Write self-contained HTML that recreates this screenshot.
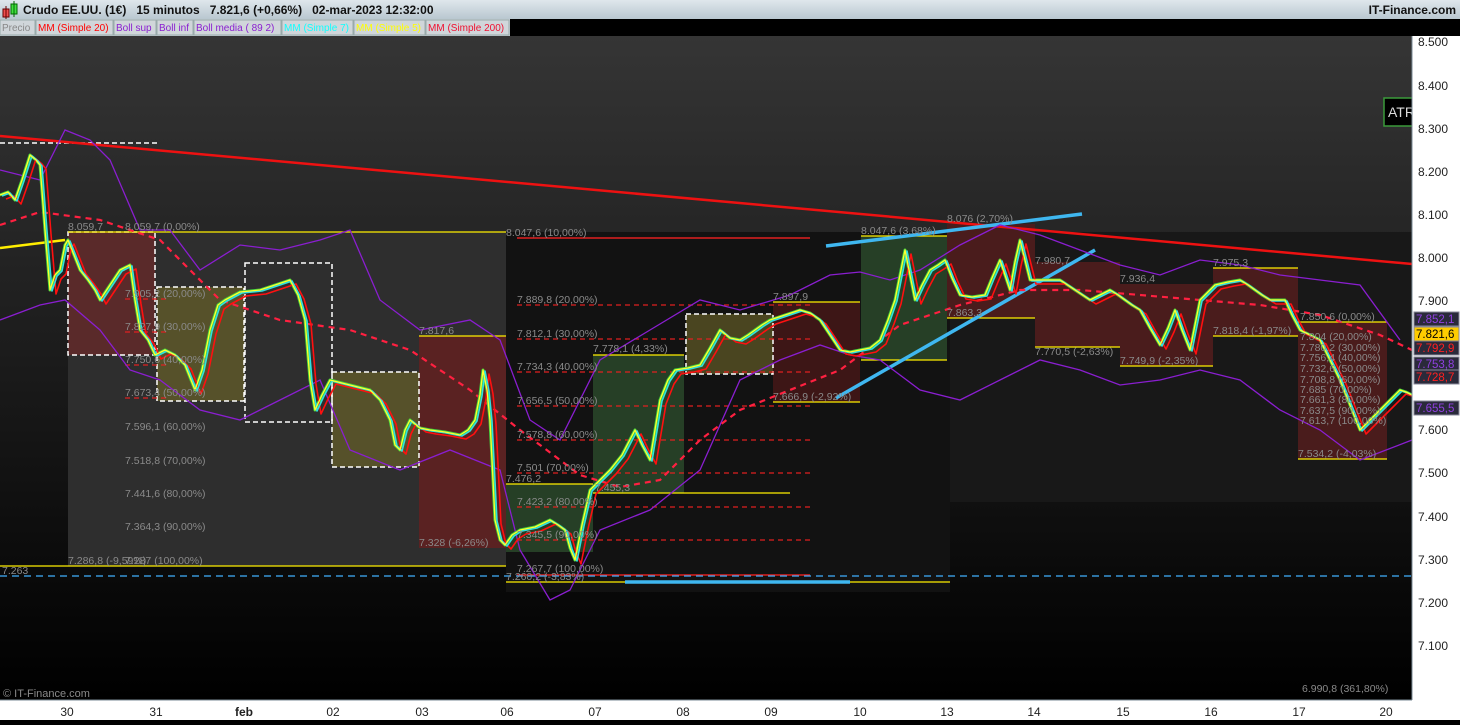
<!DOCTYPE html>
<html><head><meta charset="utf-8"><style>
body{margin:0;width:1460px;height:720px;overflow:hidden;background:#000;font-family:"Liberation Sans",sans-serif}
svg text{font-family:"Liberation Sans",sans-serif}
</style></head><body>
<svg width="1460" height="720" xmlns="http://www.w3.org/2000/svg" xmlns:xlink="http://www.w3.org/1999/xlink">
<defs>
<linearGradient id="bg" x1="0" y1="0" x2="0" y2="1"><stop offset="0" stop-color="#353535"/><stop offset="1" stop-color="#000"/></linearGradient>
<linearGradient id="hd" x1="0" y1="0" x2="0" y2="1"><stop offset="0" stop-color="#dfe7ec"/><stop offset="1" stop-color="#b9c7d0"/></linearGradient>
<path id="p" d="M0,195 L8,192 L15,200 L22,180 L30,155 L36,160 L40,165 L45,230 L50,290 L55,275 L60,270 L65,245 L68,240 L74,255 L80,270 L88,280 L95,290 L100,300 L110,285 L120,270 L130,265 L135,300 L140,330 L148,340 L155,355 L165,350 L175,355 L185,365 L195,390 L202,370 L210,330 L218,305 L225,300 L240,292 L260,290 L275,285 L290,280 L298,295 L305,320 L310,380 L315,410 L322,395 L330,380 L350,385 L370,390 L380,400 L390,420 L395,445 L400,450 L405,430 L410,420 L420,428 L430,430 L445,432 L460,435 L468,430 L475,420 L480,395 L483,370 L487,390 L490,420 L493,480 L495,520 L500,540 L505,545 L512,535 L520,530 L535,527 L550,520 L558,525 L565,530 L570,548 L575,560 L582,525 L590,490 L600,480 L610,470 L622,455 L635,430 L642,445 L650,460 L655,430 L660,400 L668,380 L675,370 L688,368 L700,365 L710,348 L720,330 L730,338 L740,340 L748,335 L755,330 L762,325 L770,320 L785,315 L800,310 L810,313 L820,320 L830,335 L840,350 L850,352 L860,350 L870,348 L880,340 L888,320 L895,300 L900,275 L905,250 L910,275 L915,300 L922,285 L930,270 L938,265 L945,260 L952,278 L960,295 L972,297 L985,295 L992,278 L1000,260 L1005,275 L1010,290 L1015,262 L1020,240 L1025,260 L1030,280 L1045,280 L1060,280 L1075,290 L1090,300 L1100,295 L1110,290 L1118,295 L1125,300 L1132,305 L1140,310 L1150,328 L1160,345 L1168,328 L1175,310 L1182,330 L1190,350 L1195,325 L1200,300 L1208,292 L1215,285 L1228,282 L1240,280 L1248,285 L1255,290 L1262,295 L1270,300 L1278,300 L1285,300 L1292,315 L1300,330 L1310,335 L1320,340 L1330,360 L1340,380 L1350,405 L1360,430 L1370,420 L1380,410 L1390,400 L1400,390 L1406,392 L1412,395"/>
</defs>
<rect x="0" y="36" width="1412" height="664" fill="url(#bg)"/>
<rect x="68" y="232" width="438" height="334" fill="#2e2e2e"/>
<rect x="506" y="232" width="444" height="360" fill="#121212"/>
<rect x="950" y="232" width="462" height="270" fill="#181818"/>
<g>
<rect x="68" y="232" width="87" height="123" fill="#5a2a2a"/>
<rect x="157" y="287" width="87" height="114" fill="#56512a"/>
<rect x="332" y="372" width="87" height="95" fill="#56512a"/>
<rect x="419" y="336" width="87" height="212" fill="#5a2222"/>
<rect x="506" y="484" width="87" height="68" fill="#263f26"/>
<rect x="593" y="355" width="91" height="138" fill="#263f26"/>
<rect x="686" y="314" width="87" height="60" fill="#4a4520"/>
<rect x="773" y="302" width="87" height="100" fill="#3d1616"/>
<rect x="861" y="236" width="86" height="124" fill="#263f26"/>
<rect x="947" y="224" width="88" height="94" fill="#4a1c1c"/>
<rect x="1035" y="262" width="85" height="85" fill="#4a1c1c"/>
<rect x="1120" y="284" width="93" height="82" fill="#4a1c1c"/>
<rect x="1213" y="268" width="85" height="68" fill="#4a1c1c"/>
<rect x="1298" y="322" width="89" height="137" fill="#4a1c1c"/>
</g>
<g fill="none" stroke="#fff" stroke-width="1.5" stroke-dasharray="5,3">
<rect x="68" y="232" width="87" height="123"/>
<rect x="157" y="287" width="87" height="114"/>
<rect x="245" y="263" width="87" height="159"/>
<rect x="332" y="372" width="87" height="95"/>
<rect x="686" y="314" width="87" height="60"/>
<line x1="0" y1="143" x2="157" y2="143"/>
</g>
<g stroke="#ffee00" stroke-width="1.3">
<line x1="68" y1="232" x2="506" y2="232"/><line x1="0" y1="566" x2="506" y2="566"/>
<line x1="419" y1="336" x2="506" y2="336"/><line x1="506" y1="484" x2="593" y2="484"/>
<line x1="506" y1="582" x2="950" y2="582"/><line x1="593" y1="355" x2="684" y2="355"/>
<line x1="593" y1="493" x2="790" y2="493"/><line x1="773" y1="302" x2="860" y2="302"/>
<line x1="773" y1="402" x2="860" y2="402"/><line x1="861" y1="236" x2="947" y2="236"/>
<line x1="861" y1="360" x2="947" y2="360"/><line x1="947" y1="318" x2="1035" y2="318"/>
<line x1="1035" y1="347" x2="1120" y2="347"/><line x1="1120" y1="366" x2="1213" y2="366"/>
<line x1="1213" y1="268" x2="1298" y2="268"/><line x1="1213" y1="336" x2="1298" y2="336"/>
<line x1="1298" y1="322" x2="1387" y2="322"/><line x1="1298" y1="459" x2="1387" y2="459"/>
<line x1="0" y1="248" x2="65" y2="240" stroke-width="2.5"/>
</g>
<g stroke="#e02020" stroke-width="1.2" stroke-dasharray="5,4">
<line x1="517" y1="305" x2="810" y2="305"/><line x1="517" y1="339" x2="810" y2="339"/>
<line x1="517" y1="372" x2="810" y2="372"/><line x1="517" y1="406" x2="810" y2="406"/>
<line x1="517" y1="440" x2="810" y2="440"/><line x1="517" y1="473" x2="810" y2="473"/>
<line x1="517" y1="507" x2="810" y2="507"/><line x1="517" y1="540" x2="810" y2="540"/>
<line x1="125" y1="299" x2="170" y2="299"/><line x1="125" y1="332" x2="170" y2="332"/>
<line x1="125" y1="365" x2="170" y2="365"/><line x1="125" y1="398" x2="170" y2="398"/>
</g>
<g stroke="#e02020" stroke-width="1.5"><line x1="517" y1="238" x2="810" y2="238"/><line x1="517" y1="575" x2="810" y2="575"/></g>
<line x1="0" y1="576" x2="1412" y2="576" stroke="#40b0ff" stroke-width="1.2" stroke-dasharray="7,5"/>
<line x1="0" y1="136" x2="1412" y2="264" stroke="#ee1111" stroke-width="2.5"/>
<g stroke="#3fb7f0" stroke-width="3.5"><line x1="826" y1="246" x2="1082" y2="214"/><line x1="836" y1="398" x2="1095" y2="250"/><line x1="625" y1="582" x2="850" y2="582"/></g>
<g fill="none" stroke="#8a1ed0" stroke-width="1.3">
<path d="M0,170 L40,180 L65,130 L90,140 L110,160 L140,230 L170,230 L200,270 L240,245 L280,250 L320,240 L350,230 L380,300 L420,330 L470,320 L500,340 L530,420 L560,440 L600,360 L650,330 L700,300 L740,310 L790,295 L830,275 L860,272 L890,280 L920,270 L960,245 L1000,225 L1040,235 L1080,250 L1120,265 L1160,275 L1200,260 L1240,265 L1280,275 L1320,280 L1360,285 L1400,340"/>
<path d="M0,320 L40,305 L65,300 L100,330 L130,370 L160,380 L200,410 L240,420 L280,400 L320,380 L350,450 L400,470 L450,450 L500,470 L520,550 L550,600 L570,590 L600,530 L650,510 L700,470 L740,380 L780,360 L820,345 L850,355 L880,360 L920,390 L960,400 L1000,380 L1040,360 L1080,370 L1120,385 L1160,380 L1200,370 L1240,380 L1280,410 L1320,430 L1360,460 L1412,440"/>
</g>
<path d="M0,225 L40,212 L100,220 L160,240 L220,300 L280,320 L350,330 L410,350 L470,390 L520,430 L580,475 L620,487 L660,480 L700,440 L740,410 L790,390 L840,370 L900,325 L960,305 L1020,290 L1080,290 L1140,295 L1200,300 L1260,305 L1320,315 L1380,335 L1412,350" fill="none" stroke="#ff2040" stroke-width="2.2" stroke-dasharray="6,5"/>
<g fill="none" stroke-linejoin="round">
<use xlink:href="#p" href="#p" stroke="#40d040" stroke-width="3"/>
<use xlink:href="#p" href="#p" stroke="#ff1010" stroke-width="1.6" transform="translate(6,4)"/>
<use xlink:href="#p" href="#p" stroke="#30e0e0" stroke-width="1.6" transform="translate(2,1)"/>
<use xlink:href="#p" href="#p" stroke="#ffff30" stroke-width="1.3"/>
</g>
<g font-size="10.5" fill="#8a8a8a">
<text x="68" y="230">8.059,7</text><text x="125" y="230">8.059,7 (0,00%)</text>
<text x="125" y="297">7.905,2 (20,00%)</text><text x="125" y="330">7.827,9 (30,00%)</text>
<text x="125" y="363">7.750,6 (40,00%)</text><text x="125" y="396">7.673,4 (50,00%)</text>
<text x="125" y="430">7.596,1 (60,00%)</text><text x="125" y="464">7.518,8 (70,00%)</text>
<text x="125" y="497">7.441,6 (80,00%)</text><text x="125" y="530">7.364,3 (90,00%)</text>
<text x="68" y="564">7.286,8 (-9,59%)</text><text x="125" y="564">7.287 (100,00%)</text>
<text x="419" y="334">7.817,6</text><text x="419" y="546">7.328 (-6,26%)</text>
<text x="506" y="236">8.047,6 (10,00%)</text>
<text x="517" y="303">7.889,8 (20,00%)</text><text x="517" y="337">7.812,1 (30,00%)</text>
<text x="517" y="370">7.734,3 (40,00%)</text><text x="517" y="404">7.656,5 (50,00%)</text>
<text x="517" y="438">7.578,8 (60,00%)</text><text x="517" y="471">7.501 (70,00%)</text>
<text x="517" y="505">7.423,2 (80,00%)</text><text x="517" y="538">7.345,5 (90,00%)</text>
<text x="517" y="572">7.267,7 (100,00%)</text><text x="506" y="580">7.260,2 (-3,83%)</text>
<text x="506" y="482">7.476,2</text><text x="595" y="491">7.455,3</text>
<text x="593" y="352">7.778,1 (4,33%)</text><text x="773" y="300">7.897,9</text>
<text x="773" y="400">7.666,9 (-2,92%)</text><text x="861" y="234">8.047,6 (3,68%)</text>
<text x="947" y="222">8.076 (2,70%)</text><text x="947" y="316">7.863,3</text>
<text x="1035" y="264">7.980,7</text><text x="1035" y="355">7.770,5 (-2,63%)</text>
<text x="1120" y="282">7.936,4</text><text x="1120" y="364">7.749,9 (-2,35%)</text>
<text x="1213" y="266">7.975,3</text><text x="1213" y="334">7.818,4 (-1,97%)</text>
<text x="1300" y="320">7.850,6 (0,00%)</text><text x="1300" y="340">7.804 (20,00%)</text>
<text x="1300" y="351">7.780,2 (30,00%)</text><text x="1300" y="361">7.756,4 (40,00%)</text>
<text x="1300" y="372">7.732,6 (50,00%)</text><text x="1300" y="383">7.708,8 (60,00%)</text>
<text x="1300" y="393">7.685 (70,00%)</text><text x="1300" y="403">7.661,3 (80,00%)</text>
<text x="1300" y="414">7.637,5 (90,00%)</text><text x="1300" y="424">7.613,7 (100,00%)</text>
<text x="1298" y="457">7.534,2 (-4,03%)</text><text x="1302" y="692">6.990,8 (361,80%)</text>
<text x="2" y="574">7.263</text>
<text x="3" y="697" font-size="11">© IT-Finance.com</text>
</g>
<rect x="1384" y="98" width="34" height="28" fill="#000" stroke="#3a9a3a" stroke-width="1.5"/>
<text x="1388" y="117" font-size="14" fill="#ddd">ATR</text>
<rect x="1412" y="36" width="48" height="684" fill="#fff"/>
<line x1="1412" y1="36" x2="1412" y2="700" stroke="#7a8a94"/>
<g font-size="12" fill="#222">
<text x="1418" y="46">8.500</text><text x="1418" y="90">8.400</text><text x="1418" y="133">8.300</text>
<text x="1418" y="176">8.200</text><text x="1418" y="219">8.100</text><text x="1418" y="262">8.000</text>
<text x="1418" y="305">7.900</text><text x="1418" y="434">7.600</text><text x="1418" y="477">7.500</text>
<text x="1418" y="521">7.400</text><text x="1418" y="564">7.300</text><text x="1418" y="607">7.200</text>
<text x="1418" y="650">7.100</text>
</g>
<g font-size="11.5">
<rect x="1414" y="312" width="45" height="14" fill="#2a2a3a" stroke="#889"/><text x="1416" y="323" fill="#9040e0">7.852,1</text>
<rect x="1414" y="327" width="45" height="14" fill="#ffcc00" stroke="#889"/><text x="1416" y="338" fill="#000">7.821,6</text>
<rect x="1414" y="341" width="45" height="14" fill="#2a2a3a" stroke="#889"/><text x="1416" y="352" fill="#ff2020">7.792,9</text>
<rect x="1414" y="357" width="45" height="14" fill="#2a2a3a" stroke="#889"/><text x="1416" y="368" fill="#9040e0">7.753,8</text>
<rect x="1414" y="370" width="45" height="14" fill="#2a2a3a" stroke="#889"/><text x="1416" y="381" fill="#ff2020">7.728,7</text>
<rect x="1414" y="401" width="45" height="14" fill="#2a2a3a" stroke="#889"/><text x="1416" y="412" fill="#9040e0">7.655,5</text>
</g>
<rect x="0" y="700" width="1460" height="20" fill="#fff"/>
<line x1="0" y1="700" x2="1412" y2="700" stroke="#7a8a94"/>
<g font-size="12" fill="#222" text-anchor="middle">
<text x="67" y="716">30</text><text x="156" y="716">31</text><text x="244" y="716" font-weight="bold">feb</text>
<text x="333" y="716">02</text><text x="422" y="716">03</text><text x="507" y="716">06</text>
<text x="595" y="716">07</text><text x="683" y="716">08</text><text x="771" y="716">09</text>
<text x="860" y="716">10</text><text x="947" y="716">13</text><text x="1034" y="716">14</text>
<text x="1123" y="716">15</text><text x="1211" y="716">16</text><text x="1299" y="716">17</text>
<text x="1386" y="716">20</text>
</g>
<rect x="0" y="0" width="1460" height="19" fill="url(#hd)"/>
<rect x="3" y="9" width="6" height="8" fill="#f05050" stroke="#600"/><line x1="6" y1="6" x2="6" y2="19" stroke="#600"/>
<rect x="11" y="4" width="6" height="10" fill="#40e040" stroke="#060"/><line x1="14" y1="1" x2="14" y2="17" stroke="#060"/>
<text x="23" y="14" font-size="12" font-weight="bold" fill="#111" xml:space="preserve">Crudo EE.UU. (1€)   15 minutos   7.821,6 (+0,66%)   02-mar-2023 12:32:00</text>
<text x="1456" y="14" font-size="12" font-weight="bold" fill="#111" text-anchor="end">IT-Finance.com</text>
<rect x="0" y="19" width="510" height="17" fill="#c8d0d6"/>
<g font-size="10" textLength="0">
<rect x="0" y="20" width="35" height="15" fill="#d0d6da" stroke="#9aa"/><text x="2" y="31" fill="#888">Precio</text>
<rect x="36" y="20" width="77" height="15" fill="#d0d6da" stroke="#9aa"/><text x="38" y="31" fill="#f00">MM (Simple 20)</text>
<rect x="114" y="20" width="42" height="15" fill="#d0d6da" stroke="#9aa"/><text x="116" y="31" fill="#8a1ed0">Boll sup</text>
<rect x="157" y="20" width="36" height="15" fill="#d0d6da" stroke="#9aa"/><text x="159" y="31" fill="#8a1ed0">Boll inf</text>
<rect x="194" y="20" width="87" height="15" fill="#d0d6da" stroke="#9aa"/><text x="196" y="31" fill="#8a1ed0">Boll media ( 89 2)</text>
<rect x="282" y="20" width="71" height="15" fill="#d0d6da" stroke="#9aa"/><text x="284" y="31" fill="#10ffff">MM (Simple 7)</text>
<rect x="354" y="20" width="71" height="15" fill="#d0d6da" stroke="#9aa"/><text x="356" y="31" fill="#ffff00">MM (Simple 5)</text>
<rect x="426" y="20" width="83" height="15" fill="#d0d6da" stroke="#9aa"/><text x="428" y="31" fill="#f01030">MM (Simple 200)</text>
</g>
</svg>
</body></html>
